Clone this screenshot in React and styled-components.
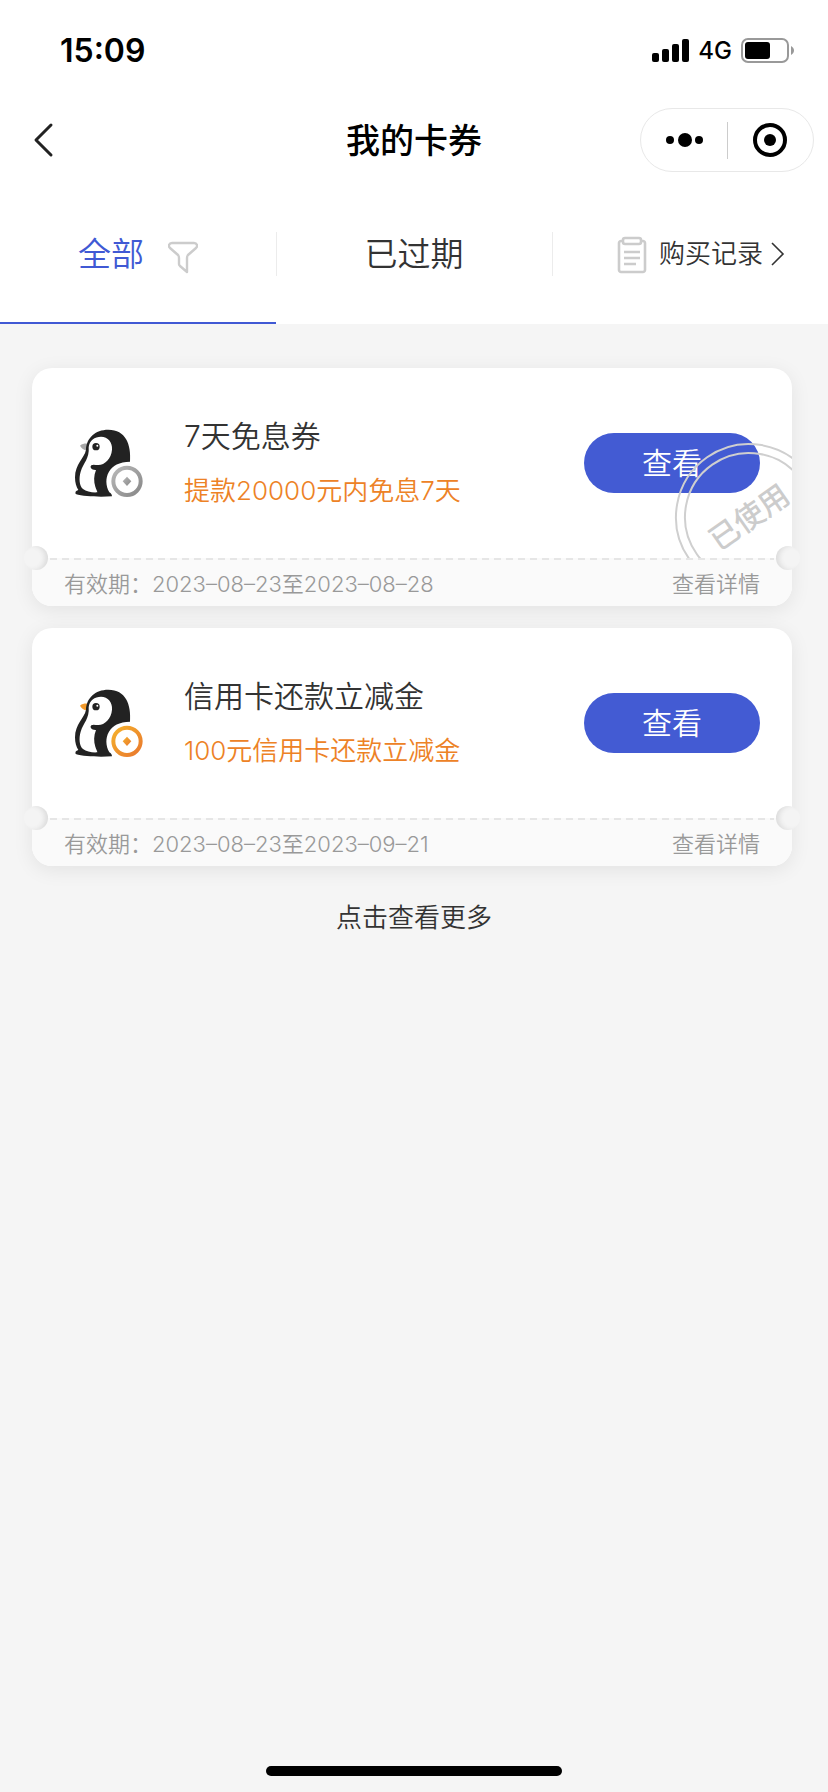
import { useId } from 'react';
import styled, { createGlobalStyle } from 'styled-components';



const GlobalStyle = createGlobalStyle`
  * {
    box-sizing: border-box;
  }

  body {
    margin: 0;
    background-color: #f5f5f5;
    color: #333333;
    font-family: Inter, "Noto Sans CJK SC", sans-serif;
    font-weight: 350;
  }

  button {
    padding: 0;
    border: none;
    background: none;
    color: inherit;
    font: inherit;
    cursor: pointer;
  }

  a {
    color: inherit;
    text-decoration: none;
  }

  svg {
    display: block;
    flex: none;
  }
`;

const Container = styled.div`
  min-height: 100vh;
  display: flex;
  flex-direction: column;
`;

const Top = styled.header`
  background-color: white;
`;

const StatusBar = styled.div`
  height: 100px;
  padding: 0 34px 0 60px;
  display: flex;
  align-items: center;
  justify-content: space-between;
  color: black;
`;

const Time = styled.span`
  font-size: 32px;
  font-weight: 600;
`;

const StatusIcons = styled.div`
  display: flex;
  align-items: center;
  gap: 9px;
`;

const Network = styled.span`
  font-size: 24px;
  font-weight: 500;
`;

const NavBar = styled.div`
  height: 80px;
  padding: 0 14px;
  display: grid;
  grid-template-columns: 1fr auto 1fr;
  align-items: center;
`;

const BackButton = styled.button`
  justify-self: start;
  padding: 0 18px;
`;

const Title = styled.h1`
  margin: 0;
  padding-top: 2px;
  color: black;
  font-size: 34px;
  font-weight: 500;
  line-height: 48px;
`;

const Capsule = styled.div`
  justify-self: end;
  width: 174px;
  height: 64px;
  display: flex;
  align-items: center;
  border: 1px solid #e8e8e8;
  border-radius: 32px;
`;

const CapsuleButton = styled.button`
  flex: 1;
  height: 100%;
  display: flex;
  align-items: center;
  justify-content: center;
`;

const CapsuleLine = styled.span`
  width: 1px;
  height: 37px;
  background-color: #cccccc;
`;

const Tabs = styled.nav`
  display: grid;
  grid-template-columns: repeat(3, 1fr);
  height: 144px;
`;

const Tab = styled.button`
  position: relative;
  padding-top: 4px;
  display: flex;
  align-items: center;
  justify-content: center;
  gap: 24px;
  color: ${(props) => props.$active && "#4059d4"};
  font-size: 33px;
  line-height: 48px;
  box-shadow: ${(props) => props.$active && "inset 0 -2px #4059d4"};

  &:not(:first-child)::before {
    content: "";
    position: absolute;
    left: 0;
    top: 52px;
    width: 1px;
    height: 44px;
    background-color: #ececec;
  }
`;

const RecordTab = styled(Tab)`
  justify-content: flex-end;
  padding-right: 43px;
  gap: 12px;
  font-size: 26px;
`;

const RecordText = styled.span`
  display: flex;
  align-items: center;
  gap: 8px;
`;

const List = styled.main`
  padding-top: 44px;
  display: flex;
  flex-direction: column;
  gap: 22px;
`;

const Card = styled.article`
  position: relative;
  margin: 0 36px 0 32px;
  border-radius: 20px;
  background-color: white;
  box-shadow: 0 4px 20px rgba(0, 0, 0, 0.08);
`;

const CardBody = styled.div`
  position: relative;
  height: 190px;
  padding: 0 32px;
  display: flex;
  align-items: center;
  overflow: hidden;
`;

const Details = styled.div`
  flex: 1;
  margin-left: 32px;
`;

const CouponName = styled.h2`
  margin: 0;
  font-size: 30px;
  font-weight: 350;
  line-height: 56px;
`;

const CouponInfo = styled.p`
  margin: 0;
  color: #ed8226;
  font-size: 26px;
  line-height: 54px;
`;

const ViewButton = styled.button`
  width: 176px;
  height: 60px;
  padding-bottom: 4px;
  border-radius: 30px;
  background-color: #435bd3;
  color: white;
  font-size: 30px;
`;

const Stamp = styled.div`
  position: absolute;
  right: -31px;
  top: 75px;
  width: 148px;
  height: 148px;
  display: flex;
  align-items: center;
  justify-content: center;
  border: 2px solid #cfcfcf;
  border-radius: 50%;
  color: #cccccc;
  font-size: 30px;
  font-weight: 500;
  line-height: 36px;
  transform: rotate(-35deg);
  pointer-events: none;

  &::before {
    content: "";
    position: absolute;
    inset: 7px;
    border: 2px solid #cfcfcf;
    border-radius: 50%;
  }
`;

const CardFooter = styled.div`
  position: relative;
  height: 48px;
  padding: 0 32px;
  display: flex;
  align-items: center;
  justify-content: space-between;
  border-radius: 0 0 20px 20px;
  background-color: #fafafa;
  color: #999999;
  font-size: 22px;

  &::before {
    content: "";
    position: absolute;
    left: 18px;
    right: 18px;
    top: 0;
    height: 2px;
    background: repeating-linear-gradient(90deg, #e6e6e6 0 7px, transparent 7px 12px);
  }
`;

const Notch = styled.span`
  position: absolute;
  top: -12px;
  left: ${(props) => props.$side === "left" && "-8px"};
  right: ${(props) => props.$side === "right" && "-8px"};
  width: 24px;
  height: 24px;
  border-radius: 50%;
  background-color: #f4f4f4;
  box-shadow: inset ${(props) => (props.$side === "left" ? "-4px" : "4px")} 0 5px -1px #dcdcdc;
`;

const MoreButton = styled.button`
  align-self: center;
  margin-top: 10px;
  font-size: 26px;
  line-height: 40px;
`;

const HomeIndicator = styled.div`
  width: 296px;
  height: 10px;
  margin: auto auto 16px;
  border-radius: 5px;
  background-color: black;
`;

const coupons = [
  {
    name: '7天免息券',
    info: '提款20000元内免息7天',
    date: '2023–08–23至2023–08–28',
    used: true,
  },
  {
    name: '信用卡还款立减金',
    info: '100元信用卡还款立减金',
    date: '2023–08–23至2023–09–21',
    used: false,
  },
];

const SignalIcon = () => (
  <svg width="37" height="23" viewBox="0 0 37 23">
    <rect x="0" y="14" width="7" height="9" rx="2" />
    <rect x="10" y="10" width="7" height="13" rx="2" />
    <rect x="20" y="5" width="7" height="18" rx="2" />
    <rect x="30" y="0" width="7" height="23" rx="2" />
  </svg>
);

const BatteryIcon = () => (
  <svg width="53" height="25" viewBox="0 0 53 25">
    <rect x="1" y="1" width="46" height="23" rx="6" fill="none" stroke="#999999" strokeWidth="2" />
    <rect x="4" y="4" width="25" height="17" rx="3" />
    <path d="M50 8c4 2 4 7 0 9z" fill="#999999" />
  </svg>
);

const FilterIcon = () => (
  <svg width="30" height="40" viewBox="0 0 30 40" fill="none" stroke="#cccccc" strokeWidth="2.4" strokeLinejoin="round">
    <path d="M4 9h22c3 0 4 3 2 5l-8 7c-1 1-1 2-1 3v14l-7-6c-1-1-1-1-1-2v-6c0-1 0-2-1-3l-8-7C0 12 1 9 4 9z" />
  </svg>
);

const ClipboardIcon = () => (
  <svg width="30" height="40" viewBox="0 0 30 40" fill="none" stroke="#cccccc" strokeWidth="2.6">
    <path d="M6 7H4c-1 0-2 1-2 2v27c0 1 1 2 2 2h22c1 0 2-1 2-2V9c0-1-1-2-2-2h-2" />
    <rect x="6" y="4" width="18" height="6" rx="2" />
    <path d="M7 18h16M7 24h16M7 30h12" />
  </svg>
);

const PenguinIcon = ({ used }) => {
  const id = useId();
  return (
    <svg width="88" height="88" viewBox="132 177 264 264">
      <defs>
        <linearGradient id={id} x1="0" y1="0" x2="1" y2="1">
          <stop offset="0" stopColor={used ? "#b8b8b8" : "#f5b12c"} />
          <stop offset="1" stopColor={used ? "#888888" : "#e9782d"} />
        </linearGradient>
      </defs>
      <path d="M180 257c7-6 16-7 24-6l-4 20c-8-1-16-6-20-14z" fill={used ? "#a8a8a8" : "#f39a2b"} />
      <path
        d="M330 305c4-52-13-96-65-96-40 0-66 26-67 60-5 26-33 43-33 83 0 17 4 29 10 38-8 2-10 7-8 12 25 8 72 9 109 7 0-5-3-10-8-12-22-41-2-92 62-92z"
        fill="#222222"
      />
      <path
        d="M206 262c2-21 18-32 37-32 21 0 35 17 33 39-2 27-22 46-41 46-9 0-16-3-21 1-6 6 1 15 14 14-7 16-7 35-2 50 2 8 6 12 6 17-16 1-33-2-43-10-11-10-13-32-7-52 8-25 27-40 24-73z"
        fill="#ffffff"
      />
      <circle cx="228" cy="260" r="11" fill="#222222" />
      <circle cx="232" cy="257" r="3" fill="#ffffff" />
      <circle cx="321" cy="364" r="41" fill="#ffffff" stroke={`url(#${id})`} strokeWidth="12" />
      <path d="M321 350l13 14-13 14-13-14z" fill={`url(#${id})`} />
    </svg>
  );
};

const Coupon = ({ name, info, date, used }) => (
  <Card>
    <CardBody>
      <PenguinIcon used={used} />
      <Details>
        <CouponName>{name}</CouponName>
        <CouponInfo>{info}</CouponInfo>
      </Details>
      <ViewButton>查看</ViewButton>
      {used && <Stamp>已使用</Stamp>}
    </CardBody>
    <CardFooter>
      <span>有效期：{date}</span>
      <a href="#detail">查看详情</a>
      <Notch $side="left" />
      <Notch $side="right" />
    </CardFooter>
  </Card>
);

const App = () => {
  return (
    <Container>
      <GlobalStyle />
      <Top>
        <StatusBar>
          <Time>15:09</Time>
          <StatusIcons>
            <SignalIcon />
            <Network>4G</Network>
            <BatteryIcon />
          </StatusIcons>
        </StatusBar>
        <NavBar>
          <BackButton aria-label="返回">
            <svg width="24" height="36" viewBox="0 0 24 36" fill="none" stroke="#222222" strokeWidth="3" strokeLinecap="round" strokeLinejoin="round">
              <path d="M19 3L4 18l15 15" />
            </svg>
          </BackButton>
          <Title>我的卡券</Title>
          <Capsule>
            <CapsuleButton aria-label="更多">
              <svg width="38" height="14" viewBox="0 0 38 14">
                <circle cx="5" cy="7" r="4" />
                <circle cx="20" cy="7" r="7" />
                <circle cx="34" cy="7" r="4" />
              </svg>
            </CapsuleButton>
            <CapsuleLine />
            <CapsuleButton aria-label="关闭">
              <svg width="34" height="34" viewBox="0 0 34 34">
                <circle cx="17" cy="17" r="15" fill="none" stroke="black" strokeWidth="4" />
                <circle cx="17" cy="17" r="6" />
              </svg>
            </CapsuleButton>
          </Capsule>
        </NavBar>
        <Tabs>
          <Tab $active>
            全部
            <FilterIcon />
          </Tab>
          <Tab>已过期</Tab>
          <RecordTab>
            <ClipboardIcon />
            <RecordText>
              购买记录
              <svg width="14" height="24" viewBox="0 0 14 24" fill="none" stroke="#333333" strokeWidth="1.6">
                <path d="M1 1l11 11L1 23" />
              </svg>
            </RecordText>
          </RecordTab>
        </Tabs>
      </Top>
      <List>
        {coupons.map((coupon) => (
          <Coupon key={coupon.name} {...coupon} />
        ))}
        <MoreButton>点击查看更多</MoreButton>
      </List>
      <HomeIndicator />
    </Container>
  );
};

export default App;
